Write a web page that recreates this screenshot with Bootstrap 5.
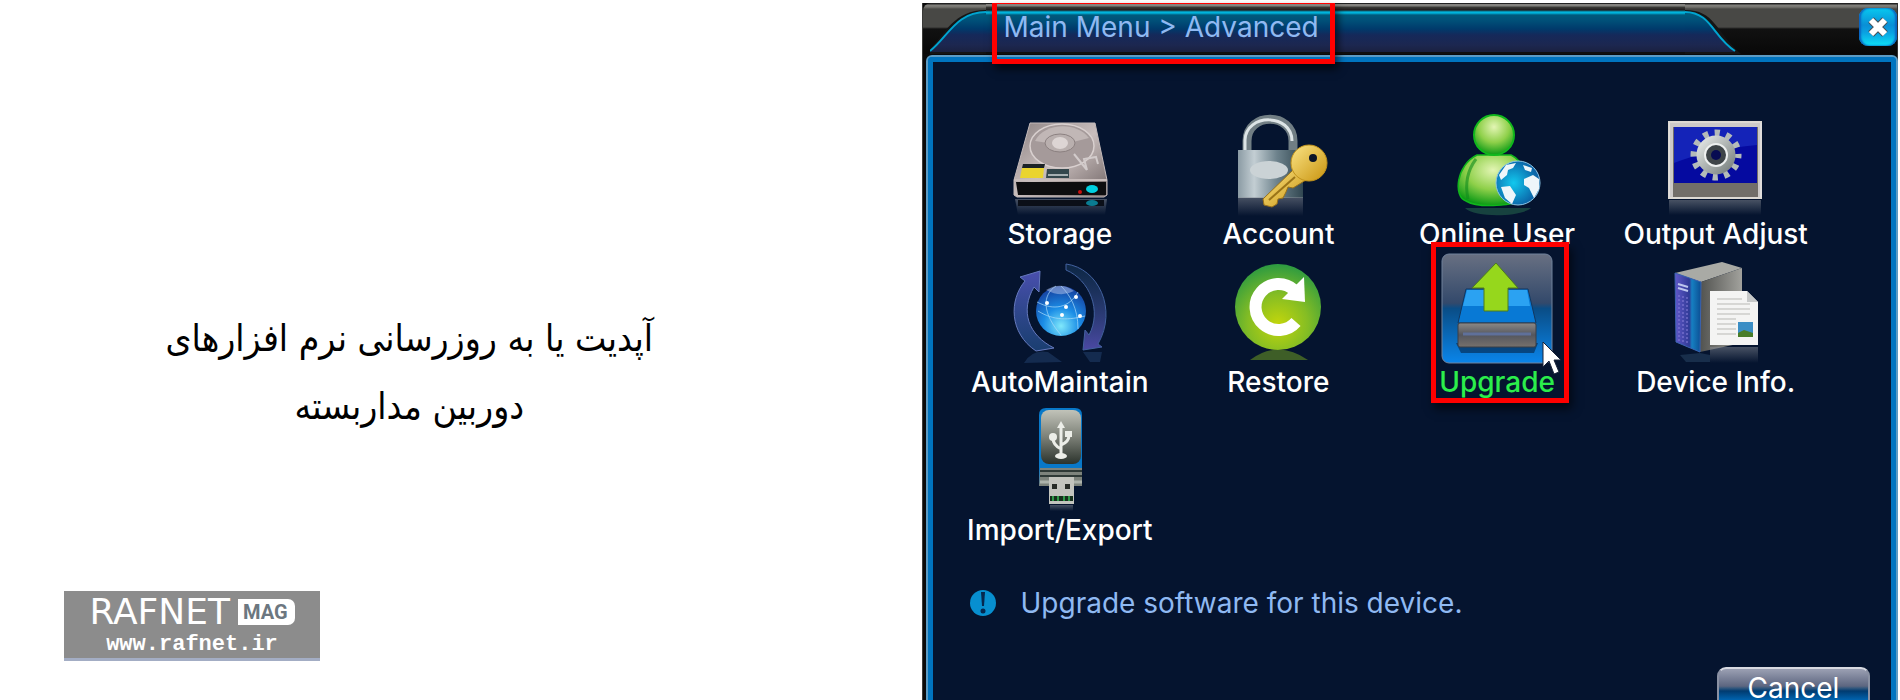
<!DOCTYPE html>
<html lang="fa">
<head>
<meta charset="utf-8">
<meta name="viewport" content="width=device-width, initial-scale=1">
<title>Rafnet Mag</title>
<link href="https://cdn.jsdelivr.net/npm/bootstrap@5.3.0/dist/css/bootstrap.min.css" rel="stylesheet">
<style>
body{background:#fff;font-family:Inter,"Liberation Sans",sans-serif;color:#fff}
.intro{flex:0 0 48.5%;padding:155px 103px 39px 0}
.intro h1{font-family:"DejaVu Sans Condensed","DejaVu Sans",sans-serif;font-size:37px;line-height:68px;color:#000;max-width:520px}
.brand{width:256px;height:70px;margin-left:64px;background:#8c8c8c;border-bottom:3px solid #a3adc4;color:#fff;text-decoration:none}
.brand-name{font:400 36px/42px "DejaVu Sans",sans-serif}
.brand-tag{font:700 20px/26px Roboto,sans-serif;background:#fff;color:#6c7780;padding:0 7px 0 5px;border-radius:0 7px 7px 0}
.brand-url{font:700 22px/24px "Liberation Mono",monospace}
.dvr{margin:3px 2px 0 0;background:#0a0a0a;border-left:1px solid #3a3a38;border-right:1px solid #333;min-width:0}
.titlebar{height:51px;background:linear-gradient(#222 0,#222 1px,#83827e 2px,#75746f 4px,#484845 6px,#484845 24px,#111 26px,#080808);border-radius:8px 0 0 0;padding-left:7px}
.tab-mid{height:51px;background:linear-gradient(#222 0 1px,#83827e 1px 3px,#3c3c38 4px,#201c1c 7px,#00b4dc 9px,#00b4dc 10px,#005a7c 12px,#004f78 18px,#003a6b 26px,#15295a 32px,#1c2750 42px,#1a2140 49px,#101010 49px);padding-left:18px}
.tab-mid span{font-size:28px;line-height:49px;color:#8fb9f2}
.tab-side{height:51px;flex:none;display:block}
.mark-title{left:6px;top:0;width:343px;height:61px;border:5px solid #f00;border-top-width:1px;box-shadow:3px 5px 8px #000a}
.close-btn{width:38px;height:38px;right:0;top:5px;border:0;border-radius:9px;background:linear-gradient(#08c9ef,#0a8fd6 45%,#0aa2e2 65%,#0de2f6);box-shadow:inset 2px 0 2px #0b62c0,inset -2px 0 2px #0b62c0;padding:0}
.pane{margin:3px 1px 0 5px;background:#05142f;border:5px solid #0074bf;border-bottom:0;box-shadow:0 0 0 2px #5d9cc4;border-radius:4px 4px 0 0;padding:43px 0 0}
.tiles{padding:0 66px 0 18px}
.tile{height:148px;background:none;border:0;padding:0;color:#fff;font-size:28px;line-height:38px;font-weight:500;display:flex;flex-direction:column;align-items:center;white-space:nowrap;width:100%}
.tile svg{width:112px;height:110px;flex:none;overflow:visible}
.tile.chosen{color:#2bee4b}
.mark-tile{left:50%;top:-11px;width:138px;height:161px;margin-left:-66px;border:5px solid #f00;box-shadow:3px 6px 9px #0009}
.hint{padding:34px 0 0 36px;font-size:28px;line-height:40px;color:#8fb9f2}
.cancel{width:153px;height:42px;border:2px solid #8a91a3;border-top-color:#d8dae2;border-radius:9px;background:linear-gradient(#9ba0b3,#5d6680 45%,#35597e 50%,#003b70 58%,#0069b8 85%,#0a84da);color:#fff;font-size:28px;line-height:34px;padding:0;margin-right:21px;margin-top:44px}
</style>
<script src="https://cdn.jsdelivr.net/npm/bootstrap@5.3.0/dist/js/bootstrap.bundle.min.js"></script>
</head>
<body>
<div class="d-flex vh-100 overflow-hidden">
  <section class="intro d-flex flex-column">
    <div class="flex-grow-1 d-flex align-items-center justify-content-center">
      <h1 class="m-0 text-center" lang="fa" dir="rtl">آپدیت یا به روزرسانی نرم افزارهای دوربین مداربسته</h1>
    </div>
    <a href="#" class="brand d-flex flex-column align-items-center">
      <span class="d-flex align-items-center gap-2"><span class="brand-name">RAFNET</span><span class="brand-tag">MAG</span></span>
      <span class="brand-url">www.rafnet.ir</span>
    </a>
  </section>

  <main class="dvr flex-grow-1 d-flex flex-column" lang="en" dir="ltr">
    <header class="titlebar d-flex position-relative flex-shrink-0">
      <svg class="tab-side" width="56" height="51" viewBox="0 0 56 51">
        <defs><linearGradient id="tg" x1="0" y1="9" x2="0" y2="49" gradientUnits="userSpaceOnUse"><stop offset=".07" stop-color="#005a7c"/><stop offset=".22" stop-color="#004f78"/><stop offset=".42" stop-color="#003a6b"/><stop offset=".57" stop-color="#15295a"/><stop offset=".82" stop-color="#1c2750"/><stop offset="1" stop-color="#1a2140"/></linearGradient></defs>
        <path d="M-3 49C14 34 22 7 56 7V51H-3z" fill="#151515"/>
        <path d="M0 49C18 34 26 9 56 9V49z" fill="url(#tg)"/><path d="M0 48C18 34 26 9 56 9" fill="none" stroke="#00a4d0" stroke-width="2"/>
      </svg>
      <div class="tab-mid flex-grow-1 position-relative"><span>Main Menu &gt; Advanced</span><div class="mark-title position-absolute"></div></div>
      <svg class="tab-side" width="212" height="51" viewBox="0 0 212 51">
        <path d="M0 7C30 7 30 28 56 51H0z" fill="#151515"/>
        <path d="M0 9C26 9 28 34 50 49H0z" fill="url(#tg)"/><path d="M0 9C26 9 28 34 50 48" fill="none" stroke="#00a4d0" stroke-width="2"/>
      </svg>
      <button class="close-btn position-absolute" type="button" aria-label="Close"><svg width="38" height="38" viewBox="0 0 38 38"><path d="M12 12L26 26M26 12L12 26" stroke="#46525a" stroke-width="8"/><path d="M12 12L26 26M26 12L12 26" stroke="#fff" stroke-width="6"/></svg></button>
    </header>

    <div class="pane flex-grow-1 flex-shrink-0">
      <div class="tiles row row-cols-4 g-0">
        <div class="col"><button class="tile" type="button">
          <svg viewBox="0 0 112 110">
            <defs><linearGradient id="hd" x2="1" y2="1"><stop stop-color="#8d8383"/><stop offset=".5" stop-color="#c9bebd"/><stop offset="1" stop-color="#6f6464"/></linearGradient>
            <linearGradient id="fade" x2="0" y2="1"><stop stop-color="#8a8f98" stop-opacity=".5"/><stop offset="1" stop-color="#8a8f98" stop-opacity="0"/></linearGradient></defs>
            <path d="M26 18H91L103 75V90L100 92H13L10 90V75z" fill="url(#hd)" stroke="#c4baba"/>
            <ellipse cx="58" cy="41" rx="32" ry="22" fill="#a59a9a" stroke="#d9d0cf" stroke-width="1.5"/><path d="M31 36C40 18 72 16 85 33L57 40z" fill="#cfc6c5" opacity=".65"/>
            <ellipse cx="56" cy="38" rx="15" ry="9" fill="#b9afae" stroke="#8c8181"/><ellipse cx="56" cy="38" rx="8" ry="6" fill="#ddd5d4"/>
            <path d="M70 49L83 65M83 65L80 54L92 52L94 59" fill="none" stroke="#d2cbcb" stroke-width="2"/>
            <path d="M19 59H41L40 63H18z" fill="#1c2326"/><path d="M18 63H40L39 73H16z" fill="#ead42f"/><path d="M43 64H65V73H42z" fill="#34474c"/><path d="M44 70H64" stroke="#a7b0b2" stroke-width="2"/>
            <path d="M12 77H102V90H14z" fill="#0d0d0f"/><path d="M10 75H103" stroke="#c8bdbb" stroke-width="2"/><ellipse cx="88" cy="84" rx="6" ry="4" fill="#00cfe0"/><circle cx="76" cy="87" r="2" fill="#c81010"/>
            <path d="M11 94H103L101 110H14z" fill="url(#fade)"/><path d="M14 95H100V101H14z" fill="#0b0f18"/><ellipse cx="88" cy="98" rx="6" ry="3" fill="#0a7c92"/>
          </svg>Storage</button></div>
        <div class="col"><button class="tile" type="button">
          <svg viewBox="0 0 112 110">
            <defs><linearGradient id="lk"><stop stop-color="#8b9ba4"/><stop offset=".25" stop-color="#c3ced3"/><stop offset=".6" stop-color="#6d828c"/><stop offset="1" stop-color="#314751"/></linearGradient>
            <linearGradient id="ky" x2="1" y2="1"><stop stop-color="#fbe486"/><stop offset="1" stop-color="#c9940f"/></linearGradient></defs>
            <path d="M25 46V36C25 7 71 7 71 36V46" fill="none" stroke="#717e84" stroke-width="9"/><path d="M23 46V35C24 8 70 8 70 36" fill="none" stroke="#dde4e6" stroke-width="3"/>
            <rect x="16" y="45" width="65" height="48" fill="url(#lk)"/><ellipse cx="47" cy="65" rx="19" ry="9" fill="#cbd3d6"/>
            <rect x="16" y="92" width="65" height="19" fill="url(#fade)"/>
            <path d="M72 64L41 94L42 100L50 102L55 99L56 94L61 93L64 87L66 82L71 83L84 75z" fill="url(#ky)" stroke="#97701a"/><circle cx="87" cy="58" r="18" fill="url(#ky)" stroke="#c1921b"/><circle cx="91" cy="53" r="4" fill="#0b1428"/><path d="M73 72L47 95" stroke="#9a7418" stroke-width="2"/>
          </svg>Account</button></div>
        <div class="col"><button class="tile" type="button">
          <svg viewBox="0 0 112 110">
            <defs><radialGradient id="gr" cx=".5" cy=".3" r=".7"><stop stop-color="#e3f5b4"/><stop offset=".55" stop-color="#8fd04a"/><stop offset="1" stop-color="#0c9a16"/></radialGradient>
            <radialGradient id="gl" cx=".4" cy=".5" r=".6"><stop stop-color="#12c8ee"/><stop offset="1" stop-color="#0a5aa0"/></radialGradient></defs>
            <path d="M36 50H70C83 56 89 75 86 92C76 102 36 103 25 96C12 92 15 60 36 50z" fill="url(#gr)" stroke="#11b51c" stroke-width="1.5"/><path d="M35 54C26 66 24 80 27 94" stroke="#0e8a1d" stroke-width="3" fill="none" opacity=".6"/>
            <circle cx="53" cy="30" r="20" fill="url(#gr)" stroke="#10b81c" stroke-width="2"/>
            <path d="M24 103H90C80 112 34 113 24 103z" fill="#2e7a55" opacity=".45"/>
            <circle cx="77" cy="78" r="22" fill="url(#gl)" stroke="#8cc6e6"/>
            <path d="M58 70L65 60L75 58L72 63L67 65L66 70L60 75zM60 82L69 81L75 90L71 99L64 93zM82 60L91 63L90 67L84 65zM83 74L92 70L98 74L98 84L93 93L88 83L83 80z" fill="#eef6fa"/>
          </svg>Online User</button></div>
        <div class="col"><button class="tile" type="button">
          <svg viewBox="0 0 112 110">
            <defs><linearGradient id="gg" x2="1" y2="1"><stop stop-color="#e0e4e2"/><stop offset="1" stop-color="#7c8482"/></linearGradient></defs>
            <rect x="9" y="17" width="92" height="76" fill="#726e69" stroke="#ddd9d3" stroke-width="2"/><path d="M14 22H97V78H14z" fill="#050aa0"/><path d="M14 22H97V40Q50 44 14 58z" fill="#1423b8"/><path d="M10 20H100M11 18V92M100 18V92" stroke="#e3e0e0" stroke-width="4" opacity=".8"/>
            <circle cx="56" cy="50" r="21" fill="none" stroke="#b4bbb9" stroke-width="9" stroke-dasharray="5 6" stroke-dashoffset="2"/>
            <circle cx="56" cy="50" r="15" fill="none" stroke="url(#gg)" stroke-width="9"/><circle cx="56" cy="50" r="11" fill="#3e4548" stroke="#edf0ef" stroke-width="2"/><circle cx="56" cy="50" r="5" fill="#080b52"/>
            <rect x="9" y="95" width="92" height="15" fill="url(#fade)"/>
          </svg>Output Adjust</button></div>
        <div class="col"><button class="tile" type="button">
          <svg viewBox="0 0 112 110">
            <defs><linearGradient id="ar" x2="0" y2="1"><stop stop-color="#4a4fae"/><stop offset="1" stop-color="#23508c" stop-opacity=".7"/></linearGradient><linearGradient id="ar2" x2="0" y2="1"><stop stop-color="#1c4468" stop-opacity=".4"/><stop offset="1" stop-color="#4b49a4"/></linearGradient>
            <radialGradient id="wg" cx=".5" cy=".8" r=".8"><stop stop-color="#7fe8fb"/><stop offset=".45" stop-color="#1b8de6"/><stop offset="1" stop-color="#153c9c"/></radialGradient></defs>
            <path d="M36 18L16 24L21 28C5 47 5 80 32 98L50 95C24 82 16 58 30 34L35 39z" fill="url(#ar)" stroke="#6579bd"/>
            <path d="M62 11C94 15 114 56 94 91L98 94L79 97L81 77L85 82C98 58 86 27 62 17z" fill="url(#ar2)" stroke="#42619f"/>
            <circle cx="57" cy="58" r="25" fill="url(#wg)"/><path d="M33 49C50 58 65 55 74 39M34 58C50 68 65 67 81 63M57 33C66 42 74 55 74 76M52 33C38 42 38 60 57 82" fill="none" stroke="#a9dcfa" opacity=".7"/><path d="M42 37Q57 28 70 38Q57 45 42 37" fill="#b6c8ed" opacity=".5"/>
            <g fill="#fff"><circle cx="43" cy="50" r="2"/><circle cx="72" cy="44" r="2"/><circle cx="62" cy="54" r="2"/><circle cx="58" cy="62" r="2"/><circle cx="76" cy="63" r="2"/></g>
            <path d="M20 110Q28 96 44 99L58 109zM79 99H98L96 109H86z" fill="#32558d" opacity=".35"/>
          </svg>AutoMaintain</button></div>
        <div class="col"><button class="tile" type="button">
          <svg viewBox="0 0 112 110">
            <defs><radialGradient id="rs" cx=".5" cy=".7" r=".7"><stop stop-color="#c3d60b"/><stop offset=".5" stop-color="#84bd24"/><stop offset="1" stop-color="#2c9a41"/></radialGradient></defs>
            <circle cx="56" cy="54" r="43" fill="url(#rs)"/><path d="M74 69A23 23 0 1 1 72 37" fill="none" stroke="#fff" stroke-width="12"/><path d="M82 24L83 49L60 46z" fill="#fff"/>
            <path d="M28 107Q56 86 86 107z" fill="#6d9a21" opacity=".55"/>
          </svg>Restore</button></div>
        <div class="col position-relative"><button class="tile chosen" type="button">
          <svg viewBox="0 0 112 110">
            <defs><linearGradient id="tl" x2="0" y2="1"><stop stop-color="#687082"/><stop offset=".45" stop-color="#33496b"/><stop offset=".5" stop-color="#0a4d86"/><stop offset="1" stop-color="#0a85ea"/></linearGradient><linearGradient id="fr" x2="0" y2="1"><stop stop-color="#8c8987"/><stop offset=".5" stop-color="#54565e"/><stop offset="1" stop-color="#77716c"/></linearGradient></defs>
            <rect x="1" y="1" width="110" height="109" rx="7" fill="url(#tl)" stroke="#71829c"/>
            <path d="M15 90H97L93 100H20z" fill="#052448" opacity=".6"/>
            <path d="M25 36H87L95 70H17z" fill="#0879d5" stroke="#12375f"/><path d="M26 37H86L89 53H22z" fill="#2ba2f2"/>
            <rect x="17" y="70" width="78" height="24" rx="2" fill="url(#fr)" stroke="#3a3e46"/><path d="M22 81H90" stroke="#5f709a" stroke-width="3"/>
            <path d="M55 10L77 35H67V58H43V35H31z" fill="#96d71c" stroke="#4d7b1e"/>
            <path d="M102 89V114L108 108L113 121L118 119L113 107H120z" fill="#fff" stroke="#182238"/>
          </svg>Upgrade</button><div class="mark-tile position-absolute"></div></div>
        <div class="col"><button class="tile" type="button">
          <svg viewBox="0 0 112 110">
            <defs><linearGradient id="sv"><stop stop-color="#51524f"/><stop offset="1" stop-color="#a2a29d"/></linearGradient><linearGradient id="pu"><stop stop-color="#6059c9"/><stop offset=".55" stop-color="#303a96"/><stop offset=".65" stop-color="#1680c2"/><stop offset="1" stop-color="#0b4e93"/></linearGradient></defs>
            <path d="M15 20L62 9L82 15L41 29z" fill="#a9aaa5"/><path d="M41 29L82 15V90L40 99z" fill="url(#sv)"/><path d="M15 20L41 29L40 99L16 89z" fill="url(#pu)" stroke="#3c64b3"/>
            <path d="M18 31L28 34M18 35L28 38" stroke="#bcc5ee" stroke-width="2"/><path d="M19 42V88M23 43V90M27 44V91" stroke="#8a80db" stroke-dasharray="2 2"/>
            <path d="M50 38H87L98 49V92H50z" fill="#f4f4f3"/><path d="M87 38V49H98z" fill="#c7c9c9"/><path d="M57 46H82M57 51H90M57 56H90M57 61H90M57 66H76M57 71H76M57 76H76M57 81H76" stroke="#b9b9b5"/>
            <rect x="78" y="69" width="15" height="15" fill="#3b8ec5"/><path d="M78 80L84 77L93 80V84H78z" fill="#497d28"/>
            <rect x="50" y="94" width="48" height="16" fill="url(#fade)"/><path d="M20 102L40 100L50 102V109H26z" fill="#345675" opacity=".4"/>
          </svg>Device Info.</button></div>
        <div class="col"><button class="tile" type="button">
          <svg viewBox="0 0 112 110">
            <defs><linearGradient id="us" x2="0" y2="1"><stop stop-color="#c1c3b9"/><stop offset=".5" stop-color="#7c8077"/><stop offset="1" stop-color="#2b332c"/></linearGradient></defs>
            <path d="M35 14Q35 7 42 7H71Q78 7 78 14V84H35z" fill="#0878c8"/><rect x="37" y="9" width="40" height="54" rx="8" fill="url(#us)"/>
            <path d="M36 67H78V85H35z" fill="#7d837c"/><path d="M36 70H78M36 75H78" stroke="#2e3936" stroke-width="2"/><path d="M36 81H78" stroke="#adb3ac" stroke-width="3"/>
            <rect x="45" y="76" width="25" height="27" fill="#c3c4be"/><path d="M48 83H53V88H48zM61 83H66V88H61z" fill="#272b27"/><path d="M46 95H69V100H46z" fill="#17301d"/><path d="M49 95V100M54 95V100M60 95V100M65 95V100" stroke="#2e9a48" stroke-width="2"/>
            <path d="M57 24V55M57 48Q49 44 49 37M57 44Q65 41 65 34" fill="none" stroke="#eceee8" stroke-width="3"/><path d="M57 20L61 27H53z" fill="#eceee8"/><circle cx="49" cy="36" r="4" fill="#eceee8"/><path d="M61 30H68V36H61z" fill="#eceee8"/><ellipse cx="57" cy="55" rx="6" ry="3" fill="#eceee8"/>
            <rect x="46" y="104" width="23" height="6" fill="url(#fade)"/>
          </svg>Import/Export</button></div>
      </div>
      <div class="hint d-flex align-items-center">
        <svg width="28" height="28" viewBox="0 0 28 28" class="me-4"><circle cx="14" cy="14" r="13" fill="#078fd0"/><path d="M12 3H16L15 17H13z" fill="#05284f"/><circle cx="14" cy="22" r="2.5" fill="#05284f"/></svg>
        <span>Upgrade software for this device.</span>
      </div>
      <div class="d-flex justify-content-end"><button class="cancel" type="button">Cancel</button></div>
    </div>
  </main>
</div>
</body>
</html>
